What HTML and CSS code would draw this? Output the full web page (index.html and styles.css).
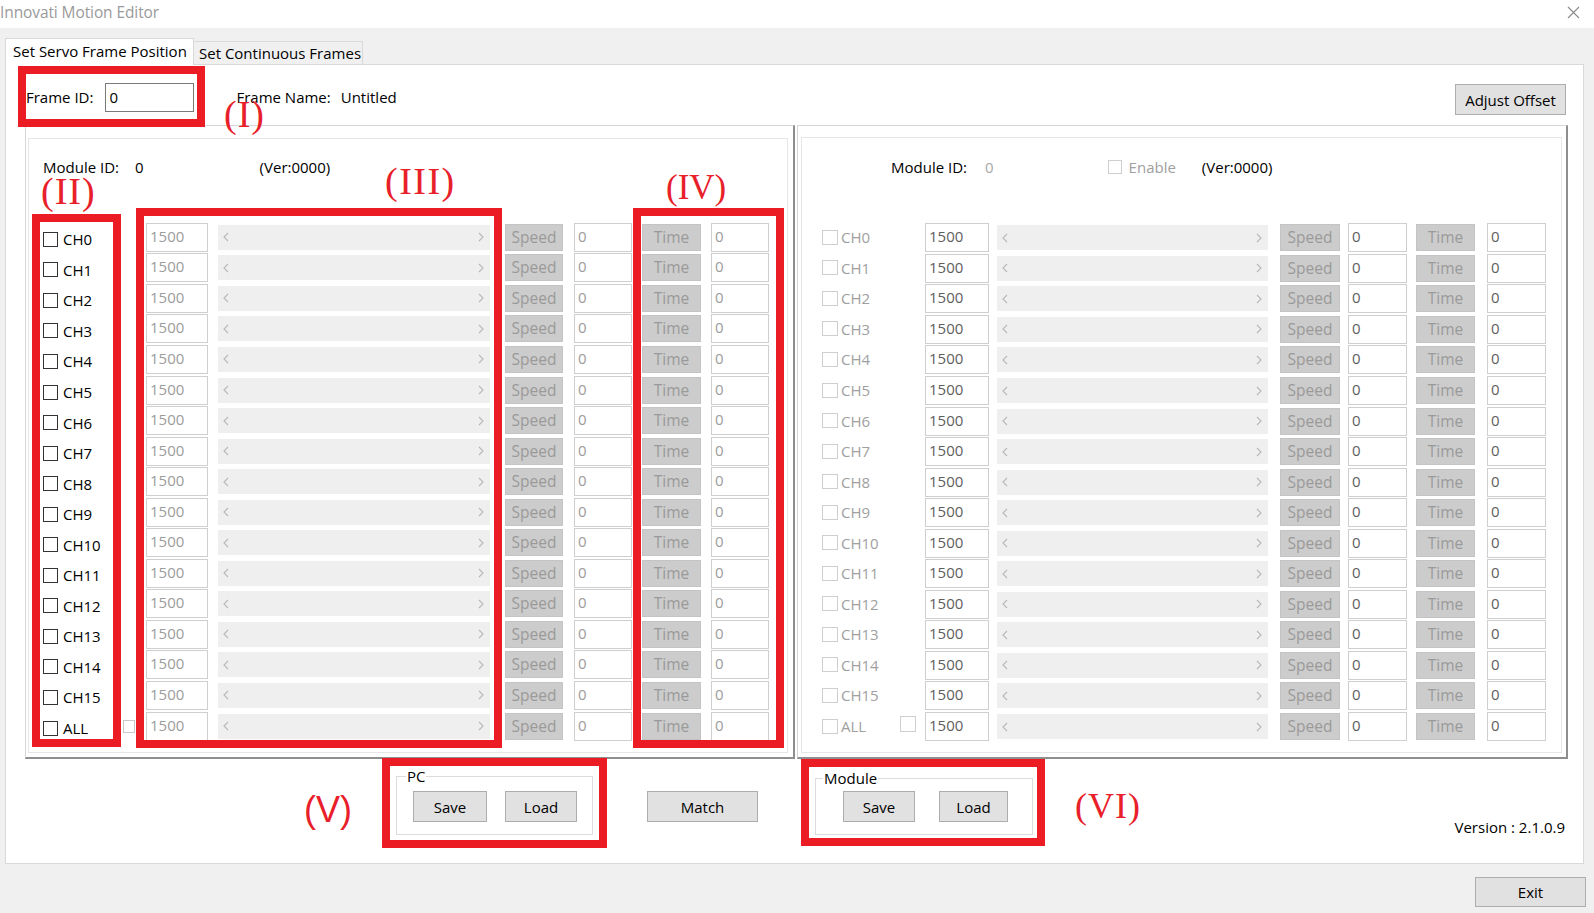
FILE: index.html
```html
<!DOCTYPE html>
<html>
<head>
<meta charset="utf-8">
<title>Innovati Motion Editor</title>
<link rel="stylesheet" href="styles.css">
</head>
<body>
<div class="titlebar">
  <span class="title">Innovati Motion Editor</span>
  <svg class="close" width="13" height="13" viewBox="0 0 13 13"><path d="M1 1 L12 12 M12 1 L1 12" stroke="#8a8a8a" stroke-width="1.1" fill="none"/></svg>
</div>

<div class="tabs">
  <div class="tab active">Set Servo Frame Position</div>
  <div class="tab">Set Continuous Frames</div>
</div>

<div class="page">
  <div class="header">
    <span class="lbl frame-id-lbl">Frame ID:</span>
    <div class="textbox frame-id">0</div>
    <span class="lbl frame-name-lbl">Frame Name:</span>
    <span class="lbl frame-name">Untitled</span>
    <button class="btn adjust">Adjust Offset</button>
  </div>

  <div class="panels">
    <div class="panel left">
      <div class="inner">
        <div class="module-row">
          <span class="mid-lbl">Module ID:</span>
          <span class="mid-val">0</span>
          <span class="ver">(Ver:0000)</span>
        </div>
        <div class="rows">
          <div class="row"><div class="ch"><span class="cb"></span>CH0</div><div class="tb">1500</div><div class="sb"><svg width="6" height="10"><polyline points="5,1 1,5 5,9"/></svg><svg width="6" height="10"><polyline points="1,1 5,5 1,9"/></svg></div><div class="gbtn speed">Speed</div><div class="tb num">0</div><div class="gbtn time">Time</div><div class="tb num">0</div></div>
          <div class="row"><div class="ch"><span class="cb"></span>CH1</div><div class="tb">1500</div><div class="sb"><svg width="6" height="10"><polyline points="5,1 1,5 5,9"/></svg><svg width="6" height="10"><polyline points="1,1 5,5 1,9"/></svg></div><div class="gbtn speed">Speed</div><div class="tb num">0</div><div class="gbtn time">Time</div><div class="tb num">0</div></div>
          <div class="row"><div class="ch"><span class="cb"></span>CH2</div><div class="tb">1500</div><div class="sb"><svg width="6" height="10"><polyline points="5,1 1,5 5,9"/></svg><svg width="6" height="10"><polyline points="1,1 5,5 1,9"/></svg></div><div class="gbtn speed">Speed</div><div class="tb num">0</div><div class="gbtn time">Time</div><div class="tb num">0</div></div>
          <div class="row"><div class="ch"><span class="cb"></span>CH3</div><div class="tb">1500</div><div class="sb"><svg width="6" height="10"><polyline points="5,1 1,5 5,9"/></svg><svg width="6" height="10"><polyline points="1,1 5,5 1,9"/></svg></div><div class="gbtn speed">Speed</div><div class="tb num">0</div><div class="gbtn time">Time</div><div class="tb num">0</div></div>
          <div class="row"><div class="ch"><span class="cb"></span>CH4</div><div class="tb">1500</div><div class="sb"><svg width="6" height="10"><polyline points="5,1 1,5 5,9"/></svg><svg width="6" height="10"><polyline points="1,1 5,5 1,9"/></svg></div><div class="gbtn speed">Speed</div><div class="tb num">0</div><div class="gbtn time">Time</div><div class="tb num">0</div></div>
          <div class="row"><div class="ch"><span class="cb"></span>CH5</div><div class="tb">1500</div><div class="sb"><svg width="6" height="10"><polyline points="5,1 1,5 5,9"/></svg><svg width="6" height="10"><polyline points="1,1 5,5 1,9"/></svg></div><div class="gbtn speed">Speed</div><div class="tb num">0</div><div class="gbtn time">Time</div><div class="tb num">0</div></div>
          <div class="row"><div class="ch"><span class="cb"></span>CH6</div><div class="tb">1500</div><div class="sb"><svg width="6" height="10"><polyline points="5,1 1,5 5,9"/></svg><svg width="6" height="10"><polyline points="1,1 5,5 1,9"/></svg></div><div class="gbtn speed">Speed</div><div class="tb num">0</div><div class="gbtn time">Time</div><div class="tb num">0</div></div>
          <div class="row"><div class="ch"><span class="cb"></span>CH7</div><div class="tb">1500</div><div class="sb"><svg width="6" height="10"><polyline points="5,1 1,5 5,9"/></svg><svg width="6" height="10"><polyline points="1,1 5,5 1,9"/></svg></div><div class="gbtn speed">Speed</div><div class="tb num">0</div><div class="gbtn time">Time</div><div class="tb num">0</div></div>
          <div class="row"><div class="ch"><span class="cb"></span>CH8</div><div class="tb">1500</div><div class="sb"><svg width="6" height="10"><polyline points="5,1 1,5 5,9"/></svg><svg width="6" height="10"><polyline points="1,1 5,5 1,9"/></svg></div><div class="gbtn speed">Speed</div><div class="tb num">0</div><div class="gbtn time">Time</div><div class="tb num">0</div></div>
          <div class="row"><div class="ch"><span class="cb"></span>CH9</div><div class="tb">1500</div><div class="sb"><svg width="6" height="10"><polyline points="5,1 1,5 5,9"/></svg><svg width="6" height="10"><polyline points="1,1 5,5 1,9"/></svg></div><div class="gbtn speed">Speed</div><div class="tb num">0</div><div class="gbtn time">Time</div><div class="tb num">0</div></div>
          <div class="row"><div class="ch"><span class="cb"></span>CH10</div><div class="tb">1500</div><div class="sb"><svg width="6" height="10"><polyline points="5,1 1,5 5,9"/></svg><svg width="6" height="10"><polyline points="1,1 5,5 1,9"/></svg></div><div class="gbtn speed">Speed</div><div class="tb num">0</div><div class="gbtn time">Time</div><div class="tb num">0</div></div>
          <div class="row"><div class="ch"><span class="cb"></span>CH11</div><div class="tb">1500</div><div class="sb"><svg width="6" height="10"><polyline points="5,1 1,5 5,9"/></svg><svg width="6" height="10"><polyline points="1,1 5,5 1,9"/></svg></div><div class="gbtn speed">Speed</div><div class="tb num">0</div><div class="gbtn time">Time</div><div class="tb num">0</div></div>
          <div class="row"><div class="ch"><span class="cb"></span>CH12</div><div class="tb">1500</div><div class="sb"><svg width="6" height="10"><polyline points="5,1 1,5 5,9"/></svg><svg width="6" height="10"><polyline points="1,1 5,5 1,9"/></svg></div><div class="gbtn speed">Speed</div><div class="tb num">0</div><div class="gbtn time">Time</div><div class="tb num">0</div></div>
          <div class="row"><div class="ch"><span class="cb"></span>CH13</div><div class="tb">1500</div><div class="sb"><svg width="6" height="10"><polyline points="5,1 1,5 5,9"/></svg><svg width="6" height="10"><polyline points="1,1 5,5 1,9"/></svg></div><div class="gbtn speed">Speed</div><div class="tb num">0</div><div class="gbtn time">Time</div><div class="tb num">0</div></div>
          <div class="row"><div class="ch"><span class="cb"></span>CH14</div><div class="tb">1500</div><div class="sb"><svg width="6" height="10"><polyline points="5,1 1,5 5,9"/></svg><svg width="6" height="10"><polyline points="1,1 5,5 1,9"/></svg></div><div class="gbtn speed">Speed</div><div class="tb num">0</div><div class="gbtn time">Time</div><div class="tb num">0</div></div>
          <div class="row"><div class="ch"><span class="cb"></span>CH15</div><div class="tb">1500</div><div class="sb"><svg width="6" height="10"><polyline points="5,1 1,5 5,9"/></svg><svg width="6" height="10"><polyline points="1,1 5,5 1,9"/></svg></div><div class="gbtn speed">Speed</div><div class="tb num">0</div><div class="gbtn time">Time</div><div class="tb num">0</div></div>
          <div class="row"><div class="ch"><span class="cb"></span>ALL<span class="cb small"></span></div><div class="tb">1500</div><div class="sb"><svg width="6" height="10"><polyline points="5,1 1,5 5,9"/></svg><svg width="6" height="10"><polyline points="1,1 5,5 1,9"/></svg></div><div class="gbtn speed">Speed</div><div class="tb num">0</div><div class="gbtn time">Time</div><div class="tb num">0</div></div>
        </div>
      </div>
    </div>

    <div class="panel right">
      <div class="inner">
        <div class="module-row">
          <span class="mid-lbl">Module ID:</span>
          <span class="mid-val">0</span>
          <span class="enable"><span class="cb"></span>Enable</span>
          <span class="ver">(Ver:0000)</span>
        </div>
        <div class="rows">
          <div class="row"><div class="ch"><span class="cb"></span>CH0</div><div class="tb">1500</div><div class="sb"><svg width="6" height="10"><polyline points="5,1 1,5 5,9"/></svg><svg width="6" height="10"><polyline points="1,1 5,5 1,9"/></svg></div><div class="gbtn speed">Speed</div><div class="tb num">0</div><div class="gbtn time">Time</div><div class="tb num">0</div></div>
          <div class="row"><div class="ch"><span class="cb"></span>CH1</div><div class="tb">1500</div><div class="sb"><svg width="6" height="10"><polyline points="5,1 1,5 5,9"/></svg><svg width="6" height="10"><polyline points="1,1 5,5 1,9"/></svg></div><div class="gbtn speed">Speed</div><div class="tb num">0</div><div class="gbtn time">Time</div><div class="tb num">0</div></div>
          <div class="row"><div class="ch"><span class="cb"></span>CH2</div><div class="tb">1500</div><div class="sb"><svg width="6" height="10"><polyline points="5,1 1,5 5,9"/></svg><svg width="6" height="10"><polyline points="1,1 5,5 1,9"/></svg></div><div class="gbtn speed">Speed</div><div class="tb num">0</div><div class="gbtn time">Time</div><div class="tb num">0</div></div>
          <div class="row"><div class="ch"><span class="cb"></span>CH3</div><div class="tb">1500</div><div class="sb"><svg width="6" height="10"><polyline points="5,1 1,5 5,9"/></svg><svg width="6" height="10"><polyline points="1,1 5,5 1,9"/></svg></div><div class="gbtn speed">Speed</div><div class="tb num">0</div><div class="gbtn time">Time</div><div class="tb num">0</div></div>
          <div class="row"><div class="ch"><span class="cb"></span>CH4</div><div class="tb">1500</div><div class="sb"><svg width="6" height="10"><polyline points="5,1 1,5 5,9"/></svg><svg width="6" height="10"><polyline points="1,1 5,5 1,9"/></svg></div><div class="gbtn speed">Speed</div><div class="tb num">0</div><div class="gbtn time">Time</div><div class="tb num">0</div></div>
          <div class="row"><div class="ch"><span class="cb"></span>CH5</div><div class="tb">1500</div><div class="sb"><svg width="6" height="10"><polyline points="5,1 1,5 5,9"/></svg><svg width="6" height="10"><polyline points="1,1 5,5 1,9"/></svg></div><div class="gbtn speed">Speed</div><div class="tb num">0</div><div class="gbtn time">Time</div><div class="tb num">0</div></div>
          <div class="row"><div class="ch"><span class="cb"></span>CH6</div><div class="tb">1500</div><div class="sb"><svg width="6" height="10"><polyline points="5,1 1,5 5,9"/></svg><svg width="6" height="10"><polyline points="1,1 5,5 1,9"/></svg></div><div class="gbtn speed">Speed</div><div class="tb num">0</div><div class="gbtn time">Time</div><div class="tb num">0</div></div>
          <div class="row"><div class="ch"><span class="cb"></span>CH7</div><div class="tb">1500</div><div class="sb"><svg width="6" height="10"><polyline points="5,1 1,5 5,9"/></svg><svg width="6" height="10"><polyline points="1,1 5,5 1,9"/></svg></div><div class="gbtn speed">Speed</div><div class="tb num">0</div><div class="gbtn time">Time</div><div class="tb num">0</div></div>
          <div class="row"><div class="ch"><span class="cb"></span>CH8</div><div class="tb">1500</div><div class="sb"><svg width="6" height="10"><polyline points="5,1 1,5 5,9"/></svg><svg width="6" height="10"><polyline points="1,1 5,5 1,9"/></svg></div><div class="gbtn speed">Speed</div><div class="tb num">0</div><div class="gbtn time">Time</div><div class="tb num">0</div></div>
          <div class="row"><div class="ch"><span class="cb"></span>CH9</div><div class="tb">1500</div><div class="sb"><svg width="6" height="10"><polyline points="5,1 1,5 5,9"/></svg><svg width="6" height="10"><polyline points="1,1 5,5 1,9"/></svg></div><div class="gbtn speed">Speed</div><div class="tb num">0</div><div class="gbtn time">Time</div><div class="tb num">0</div></div>
          <div class="row"><div class="ch"><span class="cb"></span>CH10</div><div class="tb">1500</div><div class="sb"><svg width="6" height="10"><polyline points="5,1 1,5 5,9"/></svg><svg width="6" height="10"><polyline points="1,1 5,5 1,9"/></svg></div><div class="gbtn speed">Speed</div><div class="tb num">0</div><div class="gbtn time">Time</div><div class="tb num">0</div></div>
          <div class="row"><div class="ch"><span class="cb"></span>CH11</div><div class="tb">1500</div><div class="sb"><svg width="6" height="10"><polyline points="5,1 1,5 5,9"/></svg><svg width="6" height="10"><polyline points="1,1 5,5 1,9"/></svg></div><div class="gbtn speed">Speed</div><div class="tb num">0</div><div class="gbtn time">Time</div><div class="tb num">0</div></div>
          <div class="row"><div class="ch"><span class="cb"></span>CH12</div><div class="tb">1500</div><div class="sb"><svg width="6" height="10"><polyline points="5,1 1,5 5,9"/></svg><svg width="6" height="10"><polyline points="1,1 5,5 1,9"/></svg></div><div class="gbtn speed">Speed</div><div class="tb num">0</div><div class="gbtn time">Time</div><div class="tb num">0</div></div>
          <div class="row"><div class="ch"><span class="cb"></span>CH13</div><div class="tb">1500</div><div class="sb"><svg width="6" height="10"><polyline points="5,1 1,5 5,9"/></svg><svg width="6" height="10"><polyline points="1,1 5,5 1,9"/></svg></div><div class="gbtn speed">Speed</div><div class="tb num">0</div><div class="gbtn time">Time</div><div class="tb num">0</div></div>
          <div class="row"><div class="ch"><span class="cb"></span>CH14</div><div class="tb">1500</div><div class="sb"><svg width="6" height="10"><polyline points="5,1 1,5 5,9"/></svg><svg width="6" height="10"><polyline points="1,1 5,5 1,9"/></svg></div><div class="gbtn speed">Speed</div><div class="tb num">0</div><div class="gbtn time">Time</div><div class="tb num">0</div></div>
          <div class="row"><div class="ch"><span class="cb"></span>CH15</div><div class="tb">1500</div><div class="sb"><svg width="6" height="10"><polyline points="5,1 1,5 5,9"/></svg><svg width="6" height="10"><polyline points="1,1 5,5 1,9"/></svg></div><div class="gbtn speed">Speed</div><div class="tb num">0</div><div class="gbtn time">Time</div><div class="tb num">0</div></div>
          <div class="row"><div class="ch"><span class="cb"></span>ALL<span class="cb small"></span></div><div class="tb">1500</div><div class="sb"><svg width="6" height="10"><polyline points="5,1 1,5 5,9"/></svg><svg width="6" height="10"><polyline points="1,1 5,5 1,9"/></svg></div><div class="gbtn speed">Speed</div><div class="tb num">0</div><div class="gbtn time">Time</div><div class="tb num">0</div></div>
        </div>
      </div>
    </div>
  </div>

  <div class="bottom">
    <fieldset class="group pc">
      <legend>PC</legend>
      <div class="group-btns"><button class="btn save">Save</button><button class="btn load">Load</button></div>
    </fieldset>
    <button class="btn match">Match</button>
    <fieldset class="group module">
      <legend>Module</legend>
      <div class="group-btns"><button class="btn save">Save</button><button class="btn load">Load</button></div>
    </fieldset>
    <span class="version">Version : 2.1.0.9</span>
  </div>
</div>

<div class="footer">
  <button class="btn exit">Exit</button>
</div>

<div class="mark box-i"></div>
<div class="mark box-ii"></div>
<div class="mark box-iii"></div>
<div class="mark box-iv"></div>
<div class="mark box-v"></div>
<div class="mark box-vi"></div>
<span class="tag tag-i">(I)</span>
<span class="tag tag-ii">(II)</span>
<span class="tag tag-iii">(III)</span>
<span class="tag tag-iv">(IV)</span>
<span class="tag sans tag-v">(V)</span>
<span class="tag tag-vi">(VI)</span>
</body>
</html>
```
FILE: styles.css
```css
* { box-sizing: border-box; }
html, body { margin: 0; padding: 0; }
body {
  width: 1594px;
  height: 913px;
  background: #f0f0f0;
  font-family: "Open Sans", "Noto Sans", sans-serif;
  font-size: 15px;
  color: #000;
  position: relative;
  overflow: hidden;
}

.titlebar {
  height: 28px;
  background: #fff;
  display: flex;
  align-items: center;
  justify-content: space-between;
  padding: 0 14px 0 0;
}
.title { color: #9a9a9a; font-size: 15.5px; letter-spacing: -0.1px; margin-top: -5px; }
.close { margin-top: -4px; }

.tabs {
  margin-top: 10px;
  height: 26px;
  display: flex;
  align-items: flex-end;
  padding-left: 5px;
  position: relative;
  z-index: 1;
}
.tab {
  height: 23px;
  border: 1px solid #d9d9d9;
  border-bottom: none;
  border-left: none;
  background: #f0f0f0;
  padding-left: 5px;
  width: 169px;
  line-height: 22px;
  white-space: nowrap;
}
.tab.active {
  height: 27px;
  margin-bottom: -1px;
  background: #fff;
  border-left: 1px solid #d9d9d9;
  width: 189px;
  padding-left: 7px;
  line-height: 24px;
}

.page {
  margin-left: 5px;
  width: 1579px;
  height: 800px;
  background: #fff;
  border: 1px solid #d9d9d9;
}

.header {
  height: 60px;
  display: flex;
  align-items: flex-start;
  padding: 18px 17px 0 20px;
}
.lbl { line-height: 29px; white-space: nowrap; }
.textbox {
  height: 29px;
  border: 1px solid #7a7a7a;
  padding: 1px 3px;
  line-height: 24px;
}
.frame-id { width: 89px; margin-left: 12px; }
.frame-name-lbl { margin-left: 42px; }
.frame-name { margin-left: 10px; }

.btn {
  font-family: inherit;
  font-size: 15px;
  color: #000;
  background: #e1e1e1;
  border: 1px solid #adadad;
  padding: 0;
  height: 31px;
}
.adjust { margin-left: auto; margin-top: 1px; width: 111px; }

.panels {
  display: flex;
  margin-left: 19px;
  height: 634px;
}
.panel {
  border-top: 1px solid #d6d6d6;
  border-left: 1px solid #d6d6d6;
  border-right: 2px solid #8e8e8e;
  border-bottom: 2px solid #8e8e8e;
  display: flex;
}
.panel.left { width: 770px; }
.panel.right { width: 771px; margin-left: 2px; }
.inner {
  flex: 1;
  border: 1px solid #e6e6e6;
}
.left .inner { margin: 12px 5px 4px 2px; }
.right .inner { margin: 11px 4px 4px 3px; }

.module-row {
  display: flex;
  align-items: center;
  white-space: nowrap;
}
.left .module-row { height: 56px; padding-left: 14px; }
.right .module-row { height: 58px; padding-left: 89px; }
.left .mid-val { margin-left: 16px; }
.left .ver { margin-left: 116px; }
.right .mid-val { margin-left: 18px; color: #a8a8a8; }
.enable { display: flex; align-items: center; margin-left: 114px; color: #a0a0a0; }
.enable .cb { width: 14px; height: 14px; border-color: #cfcfcf; margin-right: 7px; }
.right .ver { margin-left: 26px; }

.rows { display: flex; flex-direction: column; }
.left .rows { margin-top: 27px; padding-left: 14px; }
.right .rows { margin-top: 26.5px; padding-left: 20px; }

.row {
  height: 30.56px;
  display: grid;
  align-items: center;
}
.left .row { grid-template-columns: 103px 62px 282px 73px 69px 69px 68px; }
.right .row { grid-template-columns: 103px 64px 279px 72px 67px 68px 71px; }

.ch { display: flex; align-items: center; white-space: nowrap; }
.cb {
  display: inline-block;
  width: 15px;
  height: 15px;
  border: 1px solid #333;
  background: #fff;
  margin-right: 5px;
  flex: none;
}
.left .ch { margin-top: 4px; }
.right .ch { color: #a0a0a0; margin-top: -1px; }
.right .ch .cb { width: 16px; border-color: #cfcfcf; margin-right: 3px; }
.cb.small { margin-left: auto; margin-right: 11px; border-color: #c8c8c8; width: 12px; height: 13px; margin-top: -4px; }
.right .ch .cb.small { margin-left: auto; margin-right: 9px; width: 16px; height: 16px; }

.tb {
  height: 29px;
  border: 1px solid #cfcfcf;
  background: #fff;
  padding: 1px 3px;
  line-height: 22px;
  color: #9c9c9c;
  justify-self: end;
}
.row > .tb:nth-child(2) { justify-self: stretch; }
.right .tb { color: #5e5e5e; }
.left .tb.num { width: 58px; }
.right .tb.num { width: 59px; }

.sb {
  justify-self: end;
  height: 25px;
  background: #efefef;
  display: flex;
  align-items: center;
  justify-content: space-between;
  padding: 0 6px 0 5px;
}
.sb polyline { fill: none; stroke: #b8b8b8; stroke-width: 1.1; }
.left .sb { width: 272px; }
.right .sb { width: 271px; }

.gbtn {
  justify-self: end;
  height: 27px;
  background: #cccccc;
  border: 1px solid #c4c4c4;
  color: #9a9a9a;
  text-align: center;
  line-height: 25px;
  font-size: 15.5px;
}
.left .gbtn { width: 58px; }
.left .gbtn.time { width: 59px; }
.right .gbtn { width: 59px; }
.right .gbtn.speed { width: 60px; }

.bottom {
  display: flex;
  align-items: flex-start;
  height: 104px;
  white-space: nowrap;
}
.group {
  margin: 0;
  border: 1px solid #dcdcdc;
  min-width: 0;
}
.group legend {
  padding: 0 1px;
  line-height: 20px;
  font-size: 15px;
}
.group-btns { display: flex; }
.pc {
  margin-left: 390px;
  margin-top: 7px;
  width: 197px;
  height: 69px;
  padding: 5px 0 12px 9px;
}
.pc .save { margin-left: 7px; width: 74px; }
.pc .load { margin-left: 18px; width: 72px; }
.match { margin-left: 54px; margin-top: 32px; width: 111px; }
.module {
  margin-left: 57px;
  margin-top: 9px;
  width: 218px;
  height: 67px;
  padding: 3px 0 12px 7px;
}
.module .save { margin-left: 20px; width: 72px; }
.module .load { margin-left: 24px; width: 69px; }
.version { margin-left: auto; margin-right: 18px; margin-top: 58px; line-height: 20px; }

.footer {
  display: flex;
  justify-content: flex-end;
  padding-right: 8px;
  margin-top: 13px;
}
.exit { width: 111px; height: 30px; }

/* annotation overlays */
.mark {
  position: absolute;
  border: 8px solid #ec1c24;
}
.box-i { left: 18px; top: 66px; width: 187px; height: 61px; }
.box-ii { left: 32px; top: 214px; width: 89px; height: 533px; }
.box-iii { left: 136px; top: 208px; width: 366px; height: 540px; }
.box-iv { left: 633px; top: 208px; width: 151px; height: 540px; }
.box-v { left: 382px; top: 758px; width: 225px; height: 90px; }
.box-vi { left: 801px; top: 759px; width: 244px; height: 87px; }

.tag {
  position: absolute;
  font-family: "Liberation Serif", "DejaVu Serif", serif;
  font-size: 38px;
  line-height: 1;
  color: #e8202a;
  letter-spacing: 1px;
  white-space: nowrap;
}
.tag.sans { font-family: "Liberation Sans", "DejaVu Sans", sans-serif; font-size: 36px; letter-spacing: 0; }
.tag-i { left: 224px; top: 95px; }
.tag-ii { left: 41px; top: 172px; }
.tag-iii { left: 385px; top: 162px; letter-spacing: 1.5px; }
.tag-iv { left: 666px; top: 170px; font-size: 35px; letter-spacing: 0; }
.tag-v { left: 304px; top: 792px; }
.tag-vi { left: 1075px; top: 788px; font-size: 36px; }
```
